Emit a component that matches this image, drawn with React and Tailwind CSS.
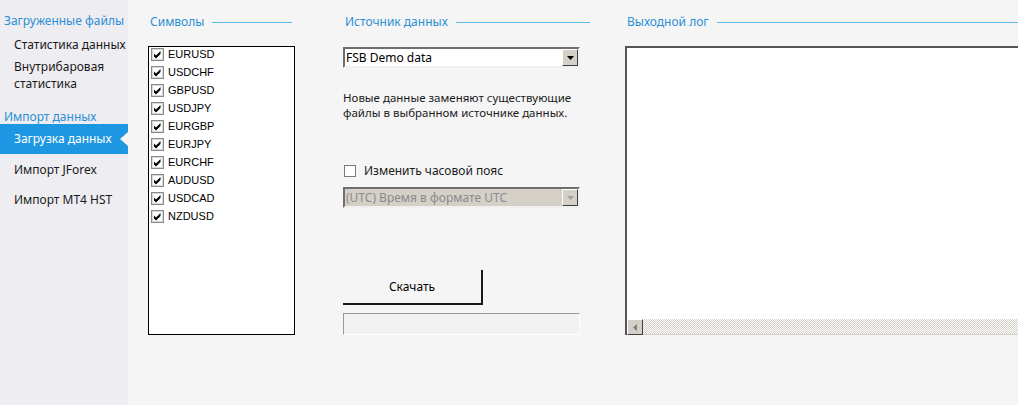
import React from "react";

const symbols = [
  "EURUSD",
  "USDCHF",
  "GBPUSD",
  "USDJPY",
  "EURGBP",
  "EURJPY",
  "EURCHF",
  "AUDUSD",
  "USDCAD",
  "NZDUSD",
];

function CheckBox({ checked }) {
  return (
    <svg width="13" height="13" viewBox="0 0 13 13" className="shrink-0">
      <rect x="0.5" y="0.5" width="12" height="12" fill="#fff" stroke="#8a8a8a" />
      <rect x="1.5" y="1.5" width="10" height="10" fill="#fff" stroke="#d8d8d8" />
      {checked && (
        <path d="M3 5.5 L5 7.5 L9.5 3 L9.5 6 L5 10.5 L3 8.5 Z" fill="#000" />
      )}
    </svg>
  );
}

function DropArrow({ disabled }) {
  return (
    <div className="w-[16px] h-[17px] bg-[#d4d0c8] border border-t-white border-l-white border-b-[#404040] border-r-[#404040] flex items-center justify-center">
      <svg width="7" height="4" viewBox="0 0 7 4">
        <path d="M0 0 H7 L3.5 4 Z" fill={disabled ? "#a0a0a0" : "#000"} />
      </svg>
    </div>
  );
}

function Title({ text }) {
  return (
    <div className="flex items-center h-[16px] gap-[8px]">
      <span className="text-[12px] text-[#2a90d4] leading-none whitespace-nowrap">{text}</span>
      <div className="flex-1 h-px bg-[#5bbce6]" />
    </div>
  );
}

function Sidebar() {
  return (
    <div className="w-[128px] shrink-0 bg-[#eeedf2] h-full pt-[13px] text-[12px]">
      <div className="pl-[4px] text-[#2a90d4] leading-[16px]">Загруженные файлы</div>
      <div className="pl-[14px] mt-[8px] text-[#1a1a1a] leading-[16px]">Статистика данных</div>
      <div className="pl-[14px] mt-[5px] text-[#1a1a1a] leading-[17px]">
        Внутрибаровая
        <br />
        статистика
      </div>
      <div className="pl-[4px] mt-[17px] text-[#2a90d4] leading-[16px]">Импорт данных</div>
      <div className="relative -mt-[1px] h-[30px] bg-[#1e97e2] text-white flex items-center pl-[14px]">
        Загрузка данных
        <svg width="8" height="14" viewBox="0 0 8 14" className="absolute right-0 top-[8px]">
          <path d="M8 0 L0 7 L8 14 Z" fill="#f5f5f5" />
        </svg>
      </div>
      <div className="pl-[14px] mt-[8px] text-[#1a1a1a] leading-[16px]">Импорт JForex</div>
      <div className="pl-[14px] mt-[14px] text-[#1a1a1a] leading-[16px]">Импорт MT4 HST</div>
    </div>
  );
}

export default function App() {
  return (
    <div
      className="w-[1018px] h-[405px] overflow-hidden flex bg-[#f5f5f5]"
      style={{ fontFamily: '"Noto Sans", "Open Sans", sans-serif' }}
    >
      <Sidebar />
      <div className="flex-1 flex pl-[20px] pt-[14px] min-w-0">
        {/* Symbols */}
        <div className="w-[147px] shrink-0">
          <div className="pl-[2px] pr-[3px]">
            <Title text="Символы" />
          </div>
          <div className="mt-[16px] h-[289px] bg-white border border-black pl-[2px]">
            {symbols.map((s) => (
              <div key={s} className="flex items-center h-[18px] pb-[3px] gap-[4px]">
                <CheckBox checked />
                <span
                  className="text-[11px] text-black leading-none"
                  style={{ fontFamily: '"Liberation Sans", Arial, sans-serif' }}
                >
                  {s}
                </span>
              </div>
            ))}
          </div>
        </div>

        {/* Source */}
        <div className="w-[247px] shrink-0 ml-[48px]">
          <div className="pl-[2px]">
            <Title text="Источник данных" />
          </div>
          <div className="mt-[17px] w-[237px] h-[21px] bg-white border-2 border-t-[#6e6e6e] border-l-[#6e6e6e] border-b-[#f0f0f0] border-r-[#f0f0f0] flex items-center justify-between">
            <span className="pl-[1px] text-[12px] text-black leading-none">FSB Demo data</span>
            <DropArrow />
          </div>
          <div className="mt-[22px] text-[11.5px] leading-[15px] text-[#1a1a1a]">
            Новые данные заменяют существующие
            <br />
            файлы в выбранном источнике данных.
          </div>
          <div className="mt-[43px] flex items-center h-[16px] gap-[8px] pl-[1px]">
            <svg width="12" height="12" viewBox="0 0 12 12">
              <rect x="0.5" y="0.5" width="11" height="11" fill="#fff" stroke="#7a7a7a" />
            </svg>
            <span className="text-[12px] text-[#1a1a1a] leading-none">Изменить часовой пояс</span>
          </div>
          <div className="mt-[8px] w-[237px] h-[21px] bg-[#d4d0c8] border-2 border-t-[#6e6e6e] border-l-[#6e6e6e] border-b-[#f0f0f0] border-r-[#f0f0f0] flex items-center justify-between">
            <span className="pl-[1px] text-[12px] text-[#8a8a8a] leading-none">(UTC) Время в формате UTC</span>
            <DropArrow disabled />
          </div>
          <button className="mt-[62px] w-[140px] h-[35px] bg-[#f5f5f5] border-r-2 border-b-2 border-[#1a1a1a] text-[12px] text-black flex items-center justify-center">
            Скачать
          </button>
          <div className="mt-[8px] w-[237px] h-[22px] bg-[#f2f2f2] border border-t-[#9a9a9a] border-l-[#9a9a9a] border-b-white border-r-white" />
        </div>

        {/* Output log */}
        <div className="flex-1 ml-[35px] min-w-0">
          <div className="pl-[2px]">
            <Title text="Выходной лог" />
          </div>
          <div className="mt-[16px] h-[289px] w-[420px] bg-white border-t-2 border-l-2 border-[#555555] flex flex-col">
            <div className="flex-1" />
            <div className="h-[16px] flex border-b border-[#d4d0c8] bg-[repeating-conic-gradient(#d4d0c8_0%_25%,#ffffff_0%_50%)] bg-[length:2px_2px]">
              <div className="w-[16px] h-[16px] bg-[#d4d0c8] border border-t-white border-l-white border-b-[#404040] border-r-[#404040] flex items-center justify-center">
                <svg width="4" height="7" viewBox="0 0 4 7">
                  <path d="M4 0 V7 L0 3.5 Z" fill="#808080" />
                </svg>
              </div>
            </div>
          </div>
        </div>
      </div>
    </div>
  );
}
